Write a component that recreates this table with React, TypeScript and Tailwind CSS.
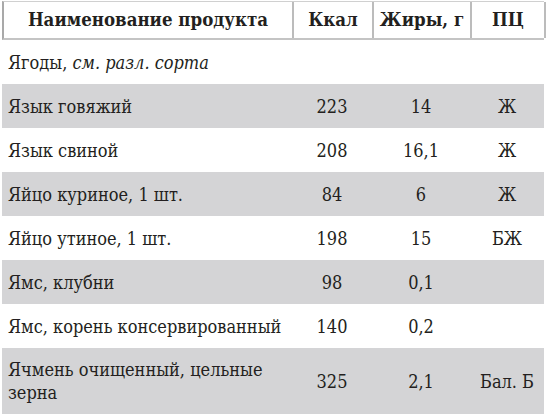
import React from "react";

const rows: { name: React.ReactNode; kcal: string; fat: string; pc: string; gray: boolean; tall?: boolean }[] = [
  { name: <span>Ягоды, <i>см. разл. сорта</i></span>, kcal: "", fat: "", pc: "", gray: false },
  { name: "Язык говяжий", kcal: "223", fat: "14", pc: "Ж", gray: true },
  { name: "Язык свиной", kcal: "208", fat: "16,1", pc: "Ж", gray: false },
  { name: "Яйцо куриное, 1 шт.", kcal: "84", fat: "6", pc: "Ж", gray: true },
  { name: "Яйцо утиное, 1 шт.", kcal: "198", fat: "15", pc: "БЖ", gray: false },
  { name: "Ямс, клубни", kcal: "98", fat: "0,1", pc: "", gray: true },
  { name: "Ямс, корень консервированный", kcal: "140", fat: "0,2", pc: "", gray: false },
  { name: "Ячмень очищенный, цельные зерна", kcal: "325", fat: "2,1", pc: "Бал. Б", gray: true, tall: true },
];

export default function App() {
  return (
    <div className="w-[546px] h-[416px] bg-white text-[#231f20] overflow-hidden">
      <div className="ml-[2px] w-[542px] pt-[1px] font-['DejaVu_Serif_Condensed','DejaVu_Serif',serif]">
        <div className="grid grid-cols-[290px_80px_98px_74px] h-[39px] border-t border-t-[#d0d0d0] border-l-2 border-l-[#a9a9a9] border-b-2 border-b-[#c4c4c4] font-bold text-[18.5px]">
          <div className="flex items-center justify-center border-r-2 border-r-[#bcbcbc]">Наименование продукта</div>
          <div className="flex items-center justify-center border-r-2 border-r-[#bcbcbc]">Ккал</div>
          <div className="flex items-center justify-center border-r-2 border-r-[#bcbcbc]">Жиры, г</div>
          <div className="flex items-center justify-center border-r-2 border-r-[#bcbcbc]">ПЦ</div>
        </div>
        {rows.map((r, i) => (
          <div
            key={i}
            className={`grid grid-cols-[290px_80px_98px_74px] text-[18px] leading-[23px] ${r.gray ? "bg-[#d4d4d6]" : "bg-white"} ${r.tall ? "h-[66px]" : "h-[44px]"}`}
          >
            <div className="flex items-center pl-[6px] pr-[2px]">{r.name}</div>
            <div className="flex items-center justify-center">{r.kcal}</div>
            <div className="flex items-center justify-center">{r.fat}</div>
            <div className="flex items-center justify-center">{r.pc}</div>
          </div>
        ))}
      </div>
    </div>
  );
}
